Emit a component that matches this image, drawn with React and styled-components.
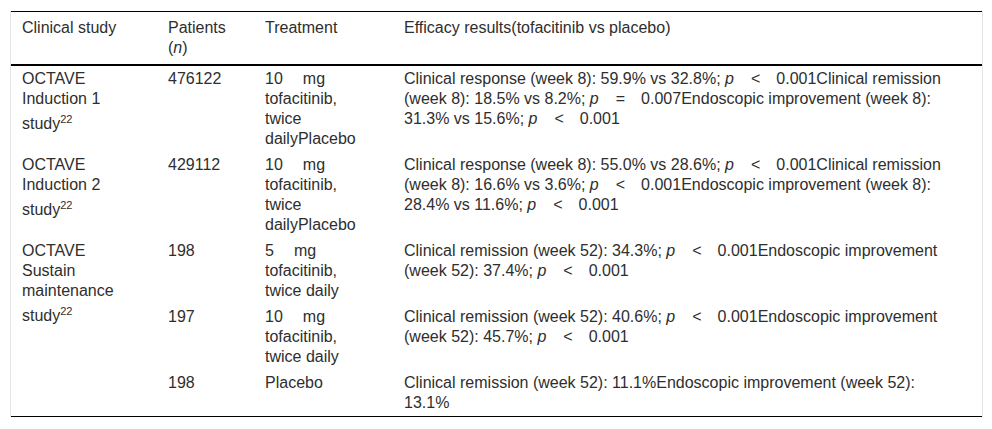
import React from "react"
import styled, { createGlobalStyle } from "styled-components"

const GlobalStyle = createGlobalStyle`
  body {
    margin: 0;
    background: #fff;
    font-family: "Liberation Sans", Arial, sans-serif;
    color: #2e2e2e;
  }
`

const Frame = styled.div`
  margin: 11px 0 0 10px;
  width: 971px;
  border-left: 1px solid #e4e4e4;
  border-right: 1px solid #e4e4e4;
`

const Table = styled.table`
  width: 971px;
  table-layout: fixed;
  border-collapse: collapse;
  font-size: 16px;
  line-height: 20px;
  border-top: 1px solid #000;
  border-bottom: 1px solid #000;
`

const Head = styled.thead`
  border-bottom: 2px solid #000;
`

const Th = styled.th`
  text-align: left;
  font-weight: 400;
  vertical-align: top;
  padding: 6px ${(p) => p.$pr}px 6px 11px;
`

const Td = styled.td`
  vertical-align: top;
  padding: 3px ${(p) => p.$pr}px 3px 11px;
`

const Sup = styled.sup`
  font-size: 11px;
  vertical-align: super;
`

const Wide = styled.span`
  display: inline-block;
  width: ${(p) => p.$w}px;
`

// right paddings per column, tuned so the text wraps like the source
const PAD = [30, 20, 38, 34]

function PValue({ op = "<", value }) {
  return (
    <>
      <i>p</i>
      <Wide $w={17} />
      {op}
      <Wide $w={16} />
      {value}
    </>
  )
}

function Dose({ mg }) {
  return (
    <>
      {mg}
      <Wide $w={20} />
      mg{" "}
    </>
  )
}

function Study({ children }) {
  return (
    <>
      OCTAVE {children} study<Sup>22</Sup>
    </>
  )
}

export default function App() {
  return (
    <>
      <GlobalStyle />
      <Frame>
        <Table>
          <colgroup>
            <col style={{ width: 146 }} />
            <col style={{ width: 97 }} />
            <col style={{ width: 139 }} />
            <col style={{ width: 589 }} />
          </colgroup>
          <Head>
            <tr>
              <Th $pr={PAD[0]}>Clinical study</Th>
              <Th $pr={PAD[1]}>
                Patients (<i>n</i>)
              </Th>
              <Th $pr={PAD[2]}>Treatment</Th>
              <Th $pr={PAD[3]}>Efficacy results(tofacitinib vs placebo)</Th>
            </tr>
          </Head>
          <tbody>
            <tr>
              <Td $pr={PAD[0]}>
                <Study>Induction 1</Study>
              </Td>
              <Td $pr={PAD[1]}>476122</Td>
              <Td $pr={PAD[2]}>
                <Dose mg="10" />
                tofacitinib, twice dailyPlacebo
              </Td>
              <Td $pr={PAD[3]}>
                Clinical response (week 8): 59.9% vs 32.8%; <PValue value="0.001" />
                Clinical remission (week 8): 18.5% vs 8.2%; <PValue op="=" value="0.007" />
                Endoscopic improvement (week 8): 31.3% vs 15.6%; <PValue value="0.001" />
              </Td>
            </tr>
            <tr>
              <Td $pr={PAD[0]}>
                <Study>Induction 2</Study>
              </Td>
              <Td $pr={PAD[1]}>429112</Td>
              <Td $pr={PAD[2]}>
                <Dose mg="10" />
                tofacitinib, twice dailyPlacebo
              </Td>
              <Td $pr={PAD[3]}>
                Clinical response (week 8): 55.0% vs 28.6%; <PValue value="0.001" />
                Clinical remission (week 8): 16.6% vs 3.6%; <PValue value="0.001" />
                Endoscopic improvement (week 8): 28.4% vs 11.6%; <PValue value="0.001" />
              </Td>
            </tr>
            <tr>
              <Td $pr={PAD[0]} rowSpan={2}>
                <Study>Sustain maintenance</Study>
              </Td>
              <Td $pr={PAD[1]}>198</Td>
              <Td $pr={PAD[2]}>
                <Dose mg="5" />
                tofacitinib, twice daily
              </Td>
              <Td $pr={PAD[3]}>
                Clinical remission (week 52): 34.3%; <PValue value="0.001" />
                Endoscopic improvement (week 52): 37.4%; <PValue value="0.001" />
              </Td>
            </tr>
            <tr>
              <Td $pr={PAD[1]}>197</Td>
              <Td $pr={PAD[2]}>
                <Dose mg="10" />
                tofacitinib, twice daily
              </Td>
              <Td $pr={PAD[3]}>
                Clinical remission (week 52): 40.6%; <PValue value="0.001" />
                Endoscopic improvement (week 52): 45.7%; <PValue value="0.001" />
              </Td>
            </tr>
            <tr>
              <Td $pr={PAD[0]} />
              <Td $pr={PAD[1]}>198</Td>
              <Td $pr={PAD[2]}>Placebo</Td>
              <Td $pr={PAD[3]}>
                Clinical remission (week 52): 11.1%Endoscopic improvement (week 52): 13.1%
              </Td>
            </tr>
          </tbody>
        </Table>
      </Frame>
    </>
  )
}
